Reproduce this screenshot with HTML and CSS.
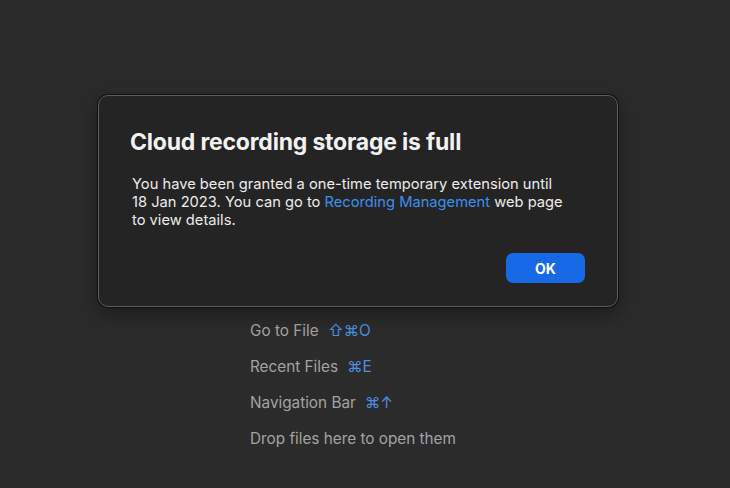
FILE: index.html
```html
<!DOCTYPE html>
<html>
<head>
<meta charset="utf-8">
<link rel="stylesheet" href="styles.css">
</head>
<body>
<div class="screen">
  <ul class="hints">
    <li class="hint">Go to File <span class="key">⇧⌘O</span></li>
    <li class="hint">Recent Files <span class="key">⌘E</span></li>
    <li class="hint">Navigation Bar <span class="key">⌘↑</span></li>
    <li class="hint">Drop files here to open them</li>
  </ul>
  <div class="dialog">
    <h1 class="title">Cloud recording storage is full</h1>
    <p class="msg">You have been granted a one-time temporary extension until<br>18 Jan 2023. You can go to <span class="link">Recording Management</span> web page<br>to view details.</p>
    <div class="actions"><button class="ok">OK</button></div>
  </div>
</div>
</body>
</html>
```
FILE: styles.css
```css
html, body { margin: 0; padding: 0; }
body {
  background: #2b2b2b;
  font-family: Inter, "Liberation Sans", sans-serif;
  width: 730px;
  height: 488px;
  overflow: hidden;
}
.screen { position: relative; width: 730px; height: 488px; }
.hints {
  list-style: none;
  margin: 0;
  padding: 321px 0 0 250px;
  display: flex;
  flex-direction: column;
  gap: 16px;
}
.hint {
  color: #a3a3a3;
  font-size: 15.3px;
  line-height: 20px;
  height: 20px;
}
.key { color: #4c8fe0; margin-left: 5px; }
.dialog {
  position: absolute;
  left: 98px;
  top: 95px;
  width: 520px;
  height: 212px;
  box-sizing: border-box;
  background: #242424;
  border: 1px solid #5c5c5c;
  border-radius: 10px;
  box-shadow: 0 0 0 1px #111, 0 6px 20px rgba(0,0,0,0.4);
  padding: 30px 31px 0 31px;
}
.title {
  margin: 0;
  color: #f2f2f2;
  font-size: 23px;
  font-weight: 700;
  line-height: 32px;
  letter-spacing: -0.2px;
}
.msg {
  margin: 17px 0 0 2px;
  color: #ececec;
  font-size: 14.7px;
  line-height: 18px;
  width: 480px;
}
.link { color: #3d8ff0; }
.actions { display: flex; justify-content: flex-end; margin-top: 24px; padding-right: 1px; }
.ok {
  width: 79px;
  height: 30px;
  border: none;
  border-radius: 7px;
  background: #1769e5;
  color: #fff;
  font-family: Inter, "Liberation Sans", sans-serif;
  font-weight: 700;
  font-size: 14px;
}
```
